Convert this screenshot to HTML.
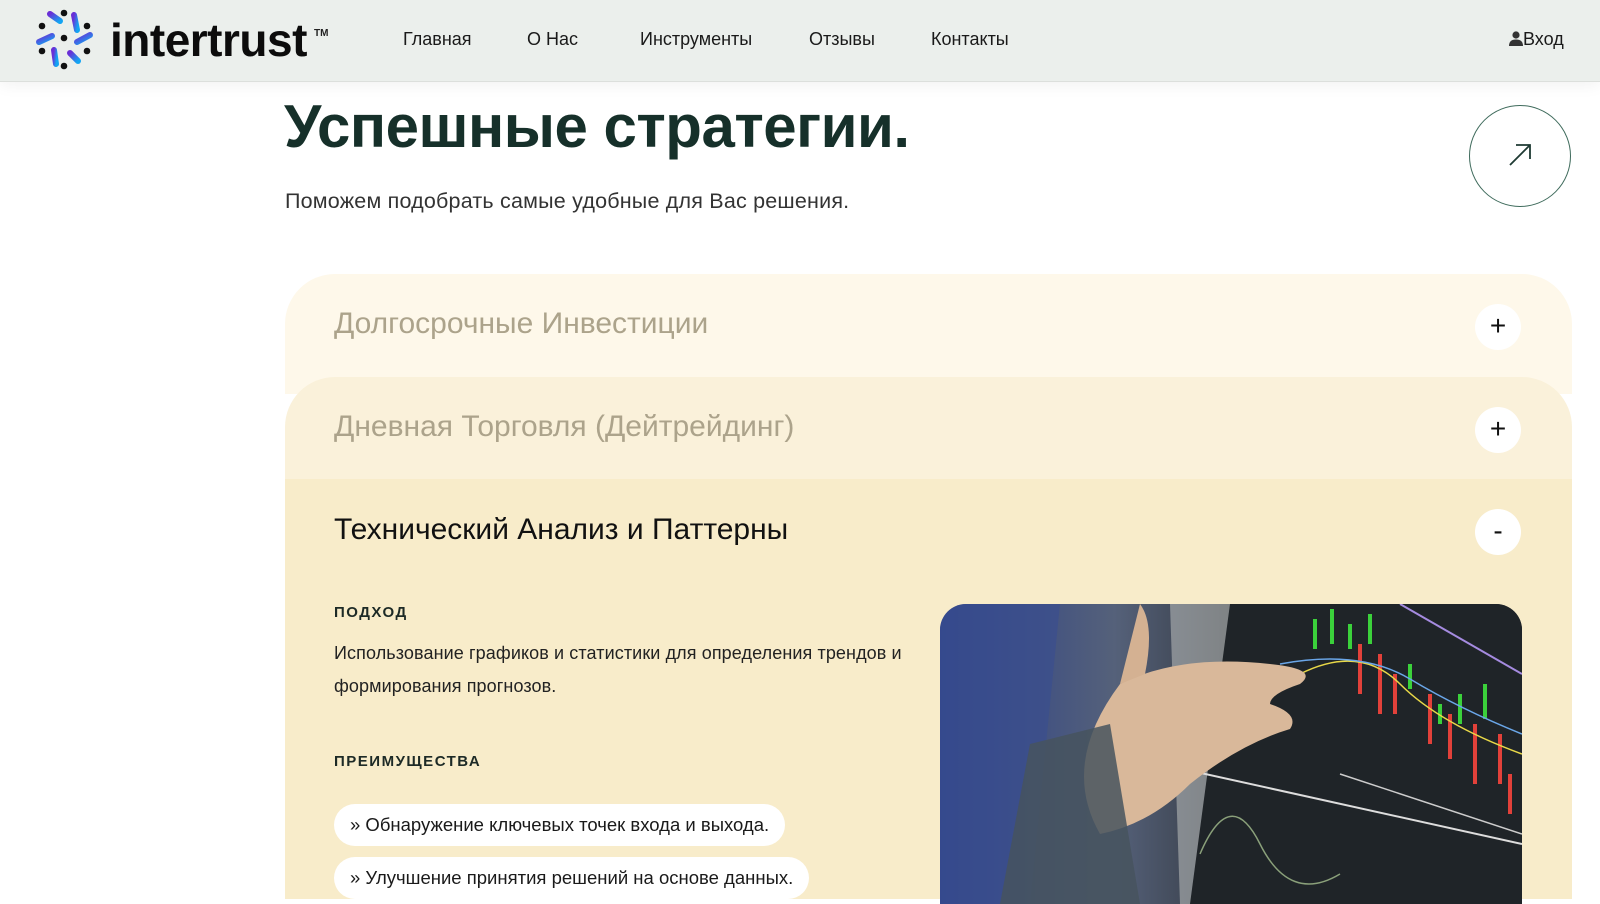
<!DOCTYPE html>
<html><head><meta charset="utf-8"><style>
*{margin:0;padding:0;box-sizing:border-box}
body{width:1600px;height:899px;overflow:hidden;background:#fff;font-family:"Liberation Sans",sans-serif;position:relative}
.hdr{position:absolute;left:0;top:0;width:1600px;height:82px;background:#ebefec;border-bottom:1px solid #dcdfdc;box-shadow:0 4px 14px rgba(0,0,0,.05)}
.nav a{position:absolute;top:29px;font-size:18px;color:#1a1a1a;text-decoration:none}
.logo{position:absolute;left:110px;top:13px;font-size:46px;font-weight:bold;color:#0c0c0c;letter-spacing:-0.5px}
.tm{position:absolute;left:314px;top:28px;font-size:10px;font-weight:bold;color:#222}
h1{position:absolute;left:284px;top:92px;font-size:60px;color:#16302a;font-weight:bold;letter-spacing:-0.5px}
.sub{position:absolute;left:285px;top:189px;font-size:21.5px;color:#333;letter-spacing:0.2px}
.circ{position:absolute;left:1469px;top:105px;width:102px;height:102px;border:1.5px solid #3f6b5c;border-radius:50%}
.acc{position:absolute;left:285px;width:1287px}
.i1{top:274px;height:120px;background:#fef8ea;border-radius:50px 50px 0 0}
.i2{top:377px;height:120px;background:#faf1da;border-radius:50px 50px 0 0}
.i3{top:479px;height:420px;background:#f8ecca}
.t{position:absolute;left:334px;font-size:30px;color:#aca38b}
.btn{position:absolute;left:1475px;width:46px;height:46px;border-radius:50%;background:#fff;text-align:center;line-height:44px;font-size:28px;color:#111}
.h{position:absolute;left:334px;font-size:15px;font-weight:bold;letter-spacing:1.5px;color:#1d2a26}
.p{position:absolute;left:334px;top:637px;width:600px;font-size:18px;line-height:33px;color:#222;letter-spacing:0.1px}
.pill{position:absolute;left:334px;height:42px;background:#fff;border-radius:21px;font-size:18.5px;line-height:42px;padding:0 16px;color:#1a1a1a}
.img{position:absolute;left:940px;top:604px;width:582px;height:300px;border-radius:26px 26px 0 0;overflow:hidden}
</style></head><body>
<div class="hdr">
<svg style="position:absolute;left:34px;top:8px" width="64" height="64" viewBox="0 0 64 64">
<defs><linearGradient id="g" x1="0" y1="0" x2="1" y2="1"><stop offset="0" stop-color="#6a2fd6"/><stop offset="1" stop-color="#13a4f2"/></linearGradient></defs>
<g fill="#111"><circle cx="30" cy="5" r="3.3"/><circle cx="8" cy="18" r="3.3"/><circle cx="53" cy="18" r="3.3"/><circle cx="30" cy="30" r="3.3"/><circle cx="8" cy="43" r="3.3"/><circle cx="53" cy="43" r="3.3"/><circle cx="30" cy="58" r="3.3"/></g>
<g stroke="url(#g)" stroke-width="6" stroke-linecap="round" fill="none"><path d="M16 6 L26 13"/><path d="M40 7 L43 22"/><path d="M56 27 L43 34"/><path d="M44 53 L36 45"/><path d="M22 56 L20 42"/><path d="M5 34 L18 28"/></g>
</svg>
<div class="logo">intertrust</div><div class="tm">TM</div>
<div class="nav"><a style="left:403px">Главная</a><a style="left:527px">О Нас</a><a style="left:640px">Инструменты</a><a style="left:809px">Отзывы</a><a style="left:931px">Контакты</a>
<a style="left:1509px;top:29px"><svg width="14" height="15" viewBox="0 0 14 15" style="vertical-align:-1px"><circle cx="7" cy="4" r="3.6" fill="#333"/><path d="M0 15 Q0 8.5 7 8.5 Q14 8.5 14 15Z" fill="#333"/></svg>Вход</a></div>
</div>
<h1>Успешные стратегии.</h1>
<div class="sub">Поможем подобрать самые удобные для Вас решения.</div>
<div class="circ"><svg width="102" height="102" viewBox="0 0 102 102" style="position:absolute;left:-1.5px;top:-1.5px"><path d="M41 60 L61 40 M47 40 H61 V54" stroke="#1e3a33" stroke-width="1.8" fill="none"/></svg></div>
<div class="acc i1"></div><div class="acc i2"></div><div class="acc i3"></div>
<div class="t" style="top:307px">Долгосрочные Инвестиции</div>
<div class="t" style="top:410px">Дневная Торговля (Дейтрейдинг)</div>
<div class="t" style="top:513px;color:#111">Технический Анализ и Паттерны</div>
<div class="btn" style="top:304px">+</div>
<div class="btn" style="top:407px">+</div>
<div class="btn" style="top:509px">-</div>
<div class="h" style="top:604px">ПОДХОД</div>
<div class="p">Использование графиков и статистики для определения трендов и формирования прогнозов.</div>
<div class="h" style="top:753px">ПРЕИМУЩЕСТВА</div>
<div class="pill" style="top:804px">» Обнаружение ключевых точек входа и выхода.</div>
<div class="pill" style="top:857px">» Улучшение принятия решений на основе данных.</div>
<div class="img"><svg width="582" height="300" viewBox="0 0 582 300">
<defs><linearGradient id="bg" x1="0" y1="0" x2="1" y2="0"><stop offset="0" stop-color="#2a3f8a"/><stop offset=".3" stop-color="#55617a"/><stop offset=".55" stop-color="#2c3033"/><stop offset="1" stop-color="#1d2226"/></linearGradient></defs>
<rect width="582" height="300" fill="url(#bg)"/>
<path d="M0 0 H120 L90 300 H0Z" fill="#3a4f8f" opacity=".7"/>
<path d="M230 0 L330 0 L270 300 L240 300Z" fill="#c9ccc8" opacity=".5"/>
<path d="M290 0 H582 V300 H250Z" fill="#1f2428"/>
<g stroke="#3bd13b" stroke-width="4"><path d="M375 15v30M392 5v35M410 20v25M430 10v30M520 90v30M545 80v35M470 60v25M500 100v20"/></g>
<g stroke="#e2413a" stroke-width="4"><path d="M420 40v50M440 50v60M455 70v40M490 90v50M510 110v45M535 120v60M560 130v50M570 170v40"/></g>
<path d="M360 70 Q420 40 460 80 T582 150" stroke="#e8d848" stroke-width="1.5" fill="none"/>
<path d="M340 60 Q420 45 470 75 T582 130" stroke="#6aa6e8" stroke-width="1.5" fill="none"/>
<path d="M460 0 L582 70" stroke="#a58be0" stroke-width="2"/>
<path d="M400 170 L582 230" stroke="#ccc" stroke-width="1.5"/>
<path d="M220 160 L582 240" stroke="#ddd" stroke-width="2"/>
<path d="M260 250 Q290 180 320 240 T400 270" stroke="#8aa07a" stroke-width="1.5" fill="none"/>
<path d="M180 80 Q240 50 330 60 Q380 65 360 80 Q330 90 330 100 Q360 110 350 125 Q300 140 250 180 Q210 220 160 230 Q120 160 180 80Z" fill="#d9b89a"/>
<path d="M200 0 Q215 20 205 70 L180 80Z" fill="#d4b192"/>
<path d="M90 140 L170 120 L200 300 L60 300Z" fill="#46545e" opacity=".85"/>
</svg></div>
</body></html>
